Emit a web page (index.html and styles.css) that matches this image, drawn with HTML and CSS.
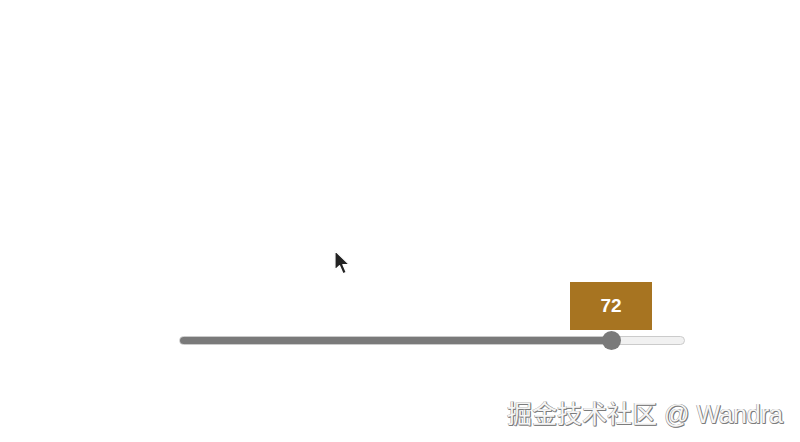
FILE: index.html
```html
<!DOCTYPE html>
<html>
<head>
<meta charset="utf-8">
<link rel="stylesheet" href="styles.css">
</head>
<body>
<div class="stage">
  <div class="slider">
    <div class="track"><div class="fill" style="width:432px"></div></div>
    <div class="thumb" style="left:423px"></div>
    <div class="tip" style="left:391px">72</div>
  </div>
  <svg class="cursor" width="20" height="28" viewBox="0 0 18 26">
    <path d="M1.5 1.5 L1.5 19.5 L5.8 15.6 L9 23 L12 21.7 L8.9 14.5 L14.8 14.5 Z" fill="#222" stroke="#fff" stroke-width="1.2" stroke-linejoin="round"/>
  </svg>
  <div class="watermark">掘金技术社区 @ Wandra</div>
</div>
</body>
</html>
```

FILE: styles.css
```css
html, body {
  margin: 0;
  padding: 0;
  background: #ffffff;
}
.stage {
  position: relative;
  width: 800px;
  height: 442px;
  overflow: hidden;
  display: flex;
  flex-direction: column;
}
.slider {
  position: relative;
  margin-left: 179px;
  margin-top: 336px;
  width: 506px;
  height: 9px;
}
.track {
  height: 9px;
  box-sizing: border-box;
  border: 1px solid #cbcbcb;
  border-radius: 5px;
  background: #f1f1f1;
  overflow: hidden;
}
.fill {
  height: 100%;
  margin: -1px 0 0 -1px;
  padding-bottom: 2px;
  background: #7a7a7a;
}
.thumb {
  position: absolute;
  top: -5px;
  width: 19px;
  height: 19px;
  border-radius: 50%;
  background: #7a7a7a;
}
.tip {
  position: absolute;
  top: -54px;
  width: 82px;
  height: 48px;
  background: #a77421;
  color: #ffffff;
  font-family: "Liberation Sans", Arial, sans-serif;
  font-weight: bold;
  font-size: 19px;
  display: flex;
  align-items: center;
  justify-content: center;
}
.cursor {
  position: absolute;
  left: 333px;
  top: 249px;
}
.watermark {
  position: absolute;
  right: 17px;
  top: 394px;
  font-family: "Liberation Sans", "Noto Sans CJK SC", sans-serif;
  font-size: 25px;
  color: #f6f6f6;
  text-shadow: 1px 1px 0 #7c7c7c, -0.5px -0.5px 0 #9a9a9a, 1px 0 0 #8a8a8a, 0 1px 0 #8a8a8a;
  white-space: nowrap;
}
```
